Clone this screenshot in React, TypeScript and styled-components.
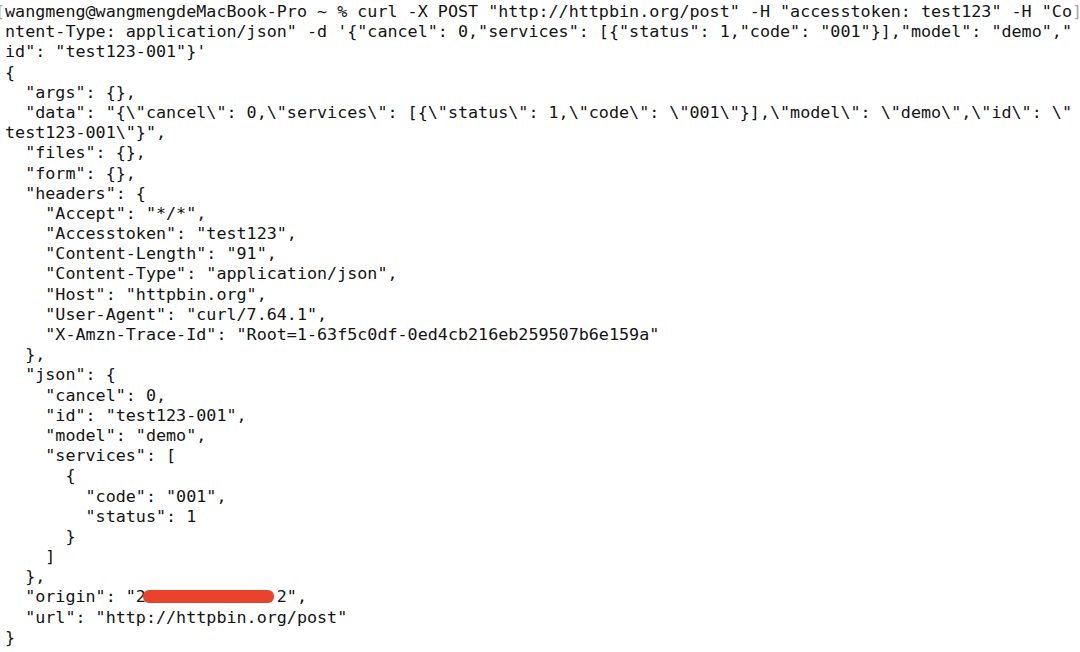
import React from "react";
import styled, { createGlobalStyle } from "styled-components";

const Global = createGlobalStyle`
  html, body {
    margin: 0;
    padding: 0;
    background: #ffffff;
    overflow: hidden;
  }
  body {
    width: 1080px;
    height: 652px;
  }
`;

const Terminal = styled.div`
  box-sizing: border-box;
  width: 1080px;
  height: 652px;
  overflow: hidden;
  padding: 1px 0 0 5px;
  background: #ffffff;
  color: #141414;
  font-family: "DejaVu Sans Mono", "Liberation Mono", monospace;
  font-size: 16.73px;
  line-height: 20.2px;
  -webkit-font-smoothing: antialiased;
`;

const Line = styled.div`
  position: relative;
  white-space: pre;
  height: 20.2px;
`;

const Mark = styled.span<{ $side: "left" | "right" }>`
  color: #a8a8a8;
  ${(p) =>
    p.$side === "left"
      ? `position: absolute; left: -1ch; top: 0;`
      : ``}
`;

const Redacted = styled.span<{ $chars: number }>`
  display: inline-block;
  width: ${(p) => p.$chars}ch;
  height: 13px;
  margin-left: -3px;
  margin-right: 3px;
  vertical-align: -1px;
  background: #e9432b;
  border-radius: 6px;
`;

const lines: string[] = [
  "",
  `ntent-Type: application/json" -d '{"cancel": 0,"services": [{"status": 1,"code": "001"}],"model": "demo","`,
  `id": "test123-001"}'`,
  `{`,
  `  "args": {},`,
  `  "data": "{\\"cancel\\": 0,\\"services\\": [{\\"status\\": 1,\\"code\\": \\"001\\"}],\\"model\\": \\"demo\\",\\"id\\": \\"`,
  `test123-001\\"}",`,
  `  "files": {},`,
  `  "form": {},`,
  `  "headers": {`,
  `    "Accept": "*/*",`,
  `    "Accesstoken": "test123",`,
  `    "Content-Length": "91",`,
  `    "Content-Type": "application/json",`,
  `    "Host": "httpbin.org",`,
  `    "User-Agent": "curl/7.64.1",`,
  `    "X-Amzn-Trace-Id": "Root=1-63f5c0df-0ed4cb216eb259507b6e159a"`,
  `  },`,
  `  "json": {`,
  `    "cancel": 0,`,
  `    "id": "test123-001",`,
  `    "model": "demo",`,
  `    "services": [`,
  `      {`,
  `        "code": "001",`,
  `        "status": 1`,
  `      }`,
  `    ]`,
  `  },`,
  "",
  `  "url": "http://httpbin.org/post"`,
  `}`,
];

export default function App() {
  return (
    <>
      <Global />
      <Terminal>
        <Line>
          <Mark $side="left">[</Mark>
          {`wangmeng@wangmengdeMacBook-Pro ~ % curl -X POST "http://httpbin.org/post" -H "accesstoken: test123" -H "Co`}
          <Mark $side="right">]</Mark>
        </Line>
        {lines.slice(1, 29).map((l, i) => (
          <Line key={i}>{l}</Line>
        ))}
        <Line>
          {`  "origin": "2`}
          <Redacted $chars={13} />
          {`2",`}
        </Line>
        {lines.slice(30).map((l, i) => (
          <Line key={`b${i}`}>{l}</Line>
        ))}
      </Terminal>
    </>
  );
}
